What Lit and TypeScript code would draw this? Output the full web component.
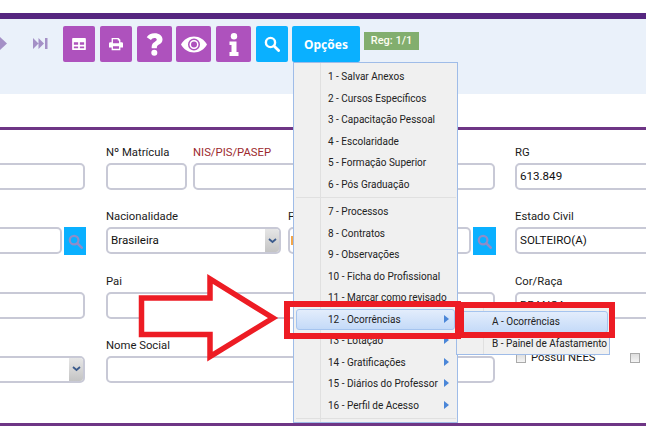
import { LitElement, html, css, svg } from "lit";
import { customElement } from "lit/decorators.js";

const search = (c: string, s: number) => html`<svg width=${s} height=${s} viewBox="0 0 16 16"><circle cx="6.500" cy="6.500" r="4.600" fill="none" stroke=${c} stroke-width="2.400"/><path d="M10 10l4.600 4.600" stroke=${c} stroke-width="2.800" stroke-linecap="round"/></svg>`;

const group1 = ["1 - Salvar Anexos","2 - Cursos Específicos","3 - Capacitação Pessoal","4 - Escolaridade","5 - Formação Superior","6 - Pós Graduação"];
const group2: [string, boolean][] = [["7 - Processos",false],["8 - Contratos",false],["9 - Observações",false],["10 - Ficha do Profissional",false],["11 - Marcar como revisado",false],["12 - Ocorrências",true],["13 - Lotação",true],["14 - Gratificações",true],["15 - Diários do Professor",true],["16 - Perfil de Acesso",true]];

@customElement("app-root")
export class AppRoot extends LitElement {
  static styles = css`
    :host { display:block; position:relative; width:646px; height:443px; overflow:hidden; background:#fff; font-family:Roboto,"Noto Sans",sans-serif; color:#1a1a1a; }
    .top { height:6px; margin-top:13px; background:#55267f; }
    .band { height:75px; background:#eaf1fa; display:flex; align-items:flex-start; padding-top:7px; box-sizing:border-box; }
    .nav { height:36px; width:63px; flex:none; }
    .btn { height:36px; border-radius:2px; background:#ae52bd; display:flex; align-items:center; justify-content:center; flex:none; }
    .b32 { width:32px; margin-right:5px; }
    .b35 { width:35px; margin-right:5px; }
    .b35.tight { margin-right:4px; }
    .blue { background:#0ab0ff; }
    .search { margin-right:0; }
    .opc { width:68px; margin-left:4px; color:#fff; font:bold 12px "Noto Sans",sans-serif; }
    .reg { margin:6px 0 0 4px; width:55px; height:18px; background:#82ae6e; color:#fdfdf0; font:500 11px/17px Roboto,sans-serif; text-align:center; }
    .line { height:3px; background:#6e3585; margin-top:33px; }
    .line.end { margin-top:0; }
    .form { height:293px; display:grid; grid-template-rows:64px 65px 63.500px 1fr; padding-top:13px; box-sizing:border-box; }
    .row { display:flex; align-items:flex-start; margin-left:-10px; }
    .f { display:flex; flex-direction:column; flex:none; }
    label { font-size:11.300px; line-height:20px; height:20px; display:block; white-space:nowrap; }
    .red { color:#9c2a2e; }
    .in { height:27px; box-sizing:border-box; border:2px solid #c8c9d6; border-radius:5px; background:#fff; font-size:11.600px; line-height:23px; padding-left:3px; position:relative; overflow:hidden; white-space:nowrap; color:#111; }
    .w95 { width:95px; margin-right:21px; }
    .w81 { width:81px; margin-right:6px; }
    .w302 { width:302px; margin-right:20px; }
    .wlast { width:200px; }
    .w389 { width:389px; margin-right:20px; }
    .g1 { margin-right:20px; }
    .g2 { width:175px; margin-right:7px; }
    .g3 { margin-right:19px; }
    .srow { display:flex; gap:2px; align-items:flex-start; }
    .s72 { width:72px; }
    .s183 { width:183px; }
    .sb { width:22px; height:28px; background:#0ab0ff; display:flex; align-items:center; justify-content:center; flex:none; }
    .sb.wide { width:23px; }
    .arrow { position:absolute; right:0; top:0; bottom:0; width:14px; background:linear-gradient(#e6e6e6,#c4c4c4); display:flex; align-items:center; justify-content:center; }
    .or { display:block; position:absolute; left:1px; top:7px; width:2px; height:9px; background:#f2a64a; }
    .checks { display:flex; align-items:center; font-size:11.300px; padding:15.500px 0 0 1px; width:200px; }
    .cb { width:10px; height:10px; border:1px solid #aaa; background:linear-gradient(#ddd,#f4f4f4); flex:none; box-sizing:border-box; }
    .cbl { margin-left:5px; width:99px; }
    .menu { position:absolute; left:293px; top:62px; width:165px; height:361px; box-sizing:border-box; border:1px solid #9fbce8; background:#f0f0f0; padding-top:3px; font-size:10px; color:#222; }
    .gut { position:absolute; left:26px; top:0; bottom:0; width:1px; background:#e0e0e0; }
    .it { position:relative; height:21.500px; line-height:21px; padding-left:34px; white-space:nowrap; box-sizing:border-box; }
    .it.hi { margin:0 2px; background:linear-gradient(#e3edfc,#c4daf8); border:1px solid #a5c4ef; border-radius:3px; line-height:19px; padding-left:31px; }
    .tri { position:absolute; right:8px; top:6px; width:0; height:0; border-left:5px solid #4a86d8; border-top:4.500px solid transparent; border-bottom:4.500px solid transparent; }
    .hi .tri { right:5px; top:5px; }
    .sep { height:1px; background:#e0e0e0; margin:2px 1px 3px 2px; position:relative; }
    .sub { position:absolute; left:456px; top:306px; width:154px; height:49px; box-sizing:border-box; border:1px solid #9fbce8; background:#f0f0f0; padding-top:4px; font-size:10px; color:#222; }
    .sub .it { margin:0 1px; height:22px; padding-left:34px; }
    .sub .it.hi { margin:0 1px; padding-left:33px; line-height:20px; }
    .over { position:absolute; inset:0; pointer-events:none; }
  `;

  render() {
    const chev = html`<svg width="9" height="6" viewBox="0 0 9 6"><path d="M1 1l3.500 3L8 1" fill="none" stroke="#3a5a8c" stroke-width="1.800"/></svg>`;
    return html`
      <div class="top"></div>
      <div class="band">
        <div class="nav">
          <svg width="63" height="36" viewBox="0 0 63 36"><path d="M0 11l7 6.500-7 6.500z" fill="#a490c6"/><path d="M33 12l5.500 5.500-5.500 5.500zM38.500 12l5.500 5.500-5.500 5.500z" fill="#a490c6"/><rect x="45" y="12" width="2.500" height="11" fill="#a490c6"/></svg>
        </div>
        <div class="btn b32"><svg width="14" height="12" viewBox="0 0 16 14"><path fill="#fff" fill-rule="evenodd" d="M1 0h14a1 1 0 0 1 1 1v12a1 1 0 0 1-1 1H1a1 1 0 0 1-1-1V1a1 1 0 0 1 1-1zM2 5v3h5V5zM9 5v3h5V5zM2 10v2h5v-2zM9 10v2h5v-2z"/></svg></div>
        <div class="btn b32"><svg width="14" height="14" viewBox="0 0 16 16"><path fill="#fff" fill-rule="evenodd" d="M3 1h8l2 2v3h1.500A1.500 1.500 0 0 1 16 7.500V12h-3v3H3v-3H0V7.500A1.500 1.500 0 0 1 1.500 6H3zM4.500 2.500V7h7V4H10V2.500zM4.500 10.500V13.500h7v-3z"/></svg></div>
        <div class="btn b35 tight"><svg width="17" height="23" viewBox="0 0 18 24"><path fill="#fff" d="M9 0c5.200 0 8.500 2.800 8.500 6.600 0 3-1.900 4.300-3.700 5.500-1.400.9-2.300 1.600-2.300 3V16H6v-1.500c0-2.800 1.500-4.100 3.200-5.200 1.300-.9 2.200-1.500 2.200-2.600S10.400 5 8.900 5C7.300 5 6.200 5.900 5.200 7.300L.8 4.300C2.500 1.500 5.300 0 9 0zM8.800 17.500a3.200 3.200 0 1 1 0 6.400 3.200 3.200 0 0 1 0-6.400z"/></svg></div>
        <div class="btn b35"><svg width="26" height="17" viewBox="0 0 26 16"><path fill="#fff" fill-rule="evenodd" d="M13 0c5.600 0 10.300 3.200 13 8-2.700 4.800-7.400 8-13 8S2.700 12.800 0 8c2.700-4.800 7.400-8 13-8zM13 2a6 6 0 1 0 0 12 6 6 0 0 0 0-12z"/><path fill="#fff" fill-rule="evenodd" d="M13 3.500a4.500 4.500 0 1 1 0 9 4.500 4.500 0 0 1 0-9zM13 5a3 3 0 1 0 0 6 3 3 0 0 0 0-6z"/></svg></div>
        <div class="btn b35"><svg width="10" height="23" viewBox="0 0 10 23"><circle cx="5" cy="3.200" r="3.200" fill="#fff"/><path fill="#fff" d="M.5 8.500H7.500V19H9.500V23H.5V19H2.500V12H.5z"/></svg></div>
        <div class="btn b32 blue search">${search("#fff", 16)}</div>
        <div class="btn opc blue">Opções</div>
        <div class="reg">Reg: 1/1</div>
      </div>
      <div class="line"></div>
      <div class="form">
        <div class="row">
          <div class="f w95"><label>&nbsp;</label><div class="in"></div></div>
          <div class="f w81"><label>Nº Matrícula</label><div class="in"></div></div>
          <div class="f w302"><label class="red">NIS/PIS/PASEP</label><div class="in"></div></div>
          <div class="f wlast"><label>RG</label><div class="in">613.849</div></div>
        </div>
        <div class="row">
          <div class="f g1"><label>&nbsp;</label><div class="srow"><div class="in s72"></div><div class="sb">${search("#8f8cc8", 15)}</div></div></div>
          <div class="f g2"><label>Nacionalidade</label><div class="in">Brasileira<span class="arrow">${chev}</span></div></div>
          <div class="f g3"><label>P</label><div class="srow"><div class="in s183"><span class="or"></span></div><div class="sb wide">${search("#8f8cc8", 15)}</div></div></div>
          <div class="f wlast"><label>Estado Civil</label><div class="in">SOLTEIRO(A)</div></div>
        </div>
        <div class="row">
          <div class="f w95"><label>&nbsp;</label><div class="in"></div></div>
          <div class="f w389"><label>Pai</label><div class="in"></div></div>
          <div class="f wlast"><label>Cor/Raça</label><div class="in">BRANCA</div></div>
        </div>
        <div class="row">
          <div class="f w95"><label>&nbsp;</label><div class="in"><span class="arrow">${chev}</span></div></div>
          <div class="f w389"><label>Nome Social</label><div class="in"></div></div>
          <div class="checks"><span class="cb"></span><span class="cbl">Possui NEES</span><span class="cb"></span></div>
        </div>
      </div>
      <div class="line end"></div>
      <div class="menu">
        <div class="gut"></div>
        ${group1.map((t) => html`<div class="it">${t}</div>`)}
        <div class="sep"></div>
        ${group2.map(([t, a], i) => html`<div class="it ${i === 5 ? "hi" : ""}">${t}${a ? html`<span class="tri"></span>` : ""}</div>`)}
        <div class="sep"></div>
      </div>
      <div class="sub">
        <div class="gut"></div>
        <div class="it hi">A - Ocorrências</div>
        <div class="it">B - Painel de Afastamento</div>
      </div>
      <svg class="over" width="646" height="443" viewBox="0 0 646 443">
        ${svg`<polygon points="141.500,298 210,298 210,279 273,318 210,356.500 210,334.500 141.500,334.500" fill="#fff" stroke="#ed1c24" stroke-width="5.500" stroke-linejoin="miter"/>
        <rect x="287" y="304" width="171" height="32" fill="none" stroke="#ed1c24" stroke-width="6"/>
        <rect x="461" y="305" width="151" height="30" fill="none" stroke="#ed1c24" stroke-width="6"/>`}
      </svg>
    `;
  }
}
